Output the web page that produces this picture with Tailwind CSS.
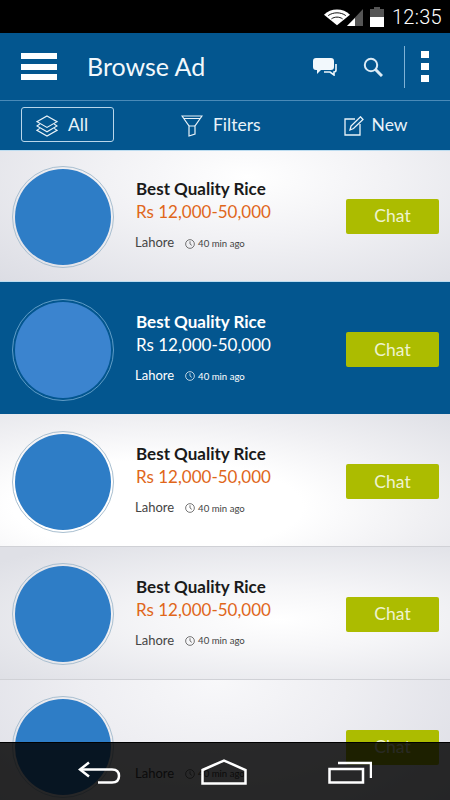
<!DOCTYPE html>
<html>
<head>
    <title>Browse Ad</title>
    <script src="https://cdn.jsdelivr.net/npm/@tailwindcss/browser@4"></script>
</head>
<body class="bg-white">
<div class="relative w-[450px] h-[800px] overflow-hidden font-[Lato,sans-serif]">

    <!-- status bar -->
    <div class="h-[33px] bg-black flex items-center justify-end pr-[8px] text-white">
        <svg width="26" height="18" viewBox="0 0 28 18" class="mr-[-1px]"><path d="M0 6.5C7 -1 21 -1 28 6.5L14 18Z" fill="#fff"/><path d="M4.5 7.5C10 3.5 18 3.5 23.5 7.5M8 11C11.5 8.5 16.5 8.5 20 11" stroke="#000" stroke-width="1" fill="none"/></svg>
        <svg width="18" height="18" viewBox="0 0 18 18" class="ml-[-3px]"><path d="M1 18L17 1V18Z" fill="#555"/><path d="M1 18L9 10V18Z" fill="#fff"/></svg>
        <svg width="14" height="20" viewBox="0 0 14 20" class="ml-[6px]"><path d="M4 0H10V2H14V20H0V2H4Z" fill="#555"/><path d="M0 10H14V20H0Z" fill="#fff"/></svg>
        <span class="ml-[8px] text-[20px] leading-none font-[Roboto,sans-serif] font-light tracking-[0.3px]">12:35</span>
    </div>

    <!-- header -->
    <div class="h-[67px] bg-[#03568f] flex items-center text-white">
        <div class="ml-[21px] w-[36px] flex flex-col gap-[4.5px]">
            <div class="h-[6px] bg-white"></div>
            <div class="h-[6px] bg-white"></div>
            <div class="h-[6px] bg-white"></div>
        </div>
        <div class="ml-[30px] text-[25px] leading-none text-[#f2f8fc]">Browse Ad</div>
        <svg width="24" height="18" viewBox="0 0 24 18" class="ml-[108px]"><path d="M3 0H18Q21 0 21 3V9Q21 12 18 12H8L4 16V12H3Q0 12 0 9V3Q0 0 3 0Z" fill="#f2f8fc"/><path d="M23 6V12Q23 14 21 14V17L17 14H11" stroke="#f2f8fc" stroke-width="1.6" fill="none"/></svg>
        <svg width="20" height="20" viewBox="0 0 20 20" class="ml-[26px]" fill="none" stroke="#dcebf5"><circle cx="8" cy="8" r="6.2" stroke-width="2"/><path d="M12.5 12.5L19 19" stroke-width="3"/></svg>
        <div class="ml-[21px] w-px h-[42px] bg-[#7fb2d6]"></div>
        <div class="ml-[16px] w-[8px] flex flex-col gap-[4.5px]">
            <div class="h-[7.5px] bg-white"></div>
            <div class="h-[7.5px] bg-white"></div>
            <div class="h-[7.5px] bg-white"></div>
        </div>
    </div>

    <!-- tabs -->
    <div class="h-[50px] bg-[#03568f] border-t border-[#4a8ab8] flex items-center text-[#eaf3f9] text-[17.5px]">
        <div class="ml-[21px] mb-[2px] w-[93px] h-[35px] border border-[#b9d6ea] rounded-[3px] flex items-center pl-[14px] gap-[10px]">
            <svg width="22" height="22" viewBox="0 0 23 23" class="mt-[3px]" fill="none" stroke="#eaf3f9" stroke-width="1.2"><path d="M11.5 1L22 7L11.5 13L1 7Z"/><path d="M4 9.5L1 11.5L11.5 17.5L22 11.5L19 9.5"/><path d="M4 14L1 16L11.5 22L22 16L19 14"/></svg>
            <span class="pt-[2px]">All</span>
        </div>
        <svg width="22" height="22" viewBox="0 0 22 22" class="ml-[67px]" fill="none" stroke="#eaf3f9" stroke-width="1.2"><path d="M1 1H21L14 11V19L8 21V11Z"/><path d="M8 11H14M3 3.5H19"/></svg>
        <span class="ml-[10px]">Filters</span>
        <svg width="20" height="20" viewBox="0 0 20 20" class="ml-[83px]" fill="none" stroke="#eaf3f9" stroke-width="1.3"><path d="M11 3H1V19H16V8"/><path d="M6 14L7 10L16.5 0.8L19 3.5L9.5 12.5Z"/></svg>
        <span class="ml-[8px]">New</span>
    </div>

    <!-- list -->
    <div>
        <div class="h-[132px] flex items-center pt-[2px] border-y border-[#bcdcf0] bg-[radial-gradient(ellipse_at_55%_20%,#ffffff_0%,#f2f2f5_40%,#dcdde4_100%)]">
            <div class="ml-[12px] w-[102px] h-[102px] rounded-full border border-[#a9bfd0] p-[2px] shrink-0"><div class="w-full h-full rounded-full bg-[#2e7dc6]"></div></div>
            <div class="ml-[21px] w-[211px] pb-[2px]">
                <div class="ml-[1px] text-[17px] leading-[22px] font-bold text-[#1a1a1a]">Best Quality Rice</div>
                <div class="ml-[1px] text-[17px] leading-[24px] text-[#e0661a]">Rs 12,000-50,000</div>
                <div class="mt-[9px] flex items-center text-[13px] text-[#444]">
                    <span class="mb-[1px]">Lahore</span>
                    <svg width="10" height="10" viewBox="0 0 11 11" class="ml-[11px]" fill="none" stroke="#444" stroke-width="0.8"><circle cx="5.5" cy="5.5" r="4.8"/><path d="M5.5 2.5V5.5L7.5 7"/></svg>
                    <span class="ml-[3px] mt-[1px] text-[9.6px]">40 min ago</span>
                </div>
            </div>
            <div class="mb-[1px] w-[93px] h-[35px] rounded-[2px] bg-[#acbc00] flex items-center justify-center text-[17.5px] text-[#eef3cf]">Chat</div>
        </div>

        <div class="h-[131.5px] flex items-center pt-[4px] bg-[#03568f] text-white">
            <div class="ml-[12px] w-[102px] h-[102px] rounded-full border border-[#5f9cc6] p-[2px] shrink-0"><div class="w-full h-full rounded-full bg-[#3b84cf]"></div></div>
            <div class="ml-[21px] w-[211px] pb-[2px]">
                <div class="ml-[1px] text-[17px] leading-[22px] font-bold">Best Quality Rice</div>
                <div class="ml-[1px] text-[17px] leading-[24px]">Rs 12,000-50,000</div>
                <div class="mt-[9px] flex items-center text-[13px]">
                    <span class="mb-[1px]">Lahore</span>
                    <svg width="10" height="10" viewBox="0 0 11 11" class="ml-[11px]" fill="none" stroke="#fff" stroke-width="0.8"><circle cx="5.5" cy="5.5" r="4.8"/><path d="M5.5 2.5V5.5L7.5 7"/></svg>
                    <span class="ml-[3px] mt-[1px] text-[9.6px]">40 min ago</span>
                </div>
            </div>
            <div class="w-[93px] h-[35px] rounded-[2px] bg-[#acbc00] flex items-center justify-center text-[17.5px] text-[#eef3cf]">Chat</div>
        </div>

        <div class="h-[133.5px] flex items-center pt-[4px] border-b border-[#d0d1d6] bg-[radial-gradient(ellipse_at_35%_70%,#ffffff_0%,#ffffff_35%,#f0f0f3_65%,#dfe0e6_100%)]">
            <div class="ml-[12px] w-[102px] h-[102px] rounded-full border border-[#a9bfd0] p-[2px] shrink-0"><div class="w-full h-full rounded-full bg-[#2e7dc6]"></div></div>
            <div class="ml-[21px] w-[211px] pb-[2px]">
                <div class="ml-[1px] text-[17px] leading-[22px] font-bold text-[#1a1a1a]">Best Quality Rice</div>
                <div class="ml-[1px] text-[17px] leading-[24px] text-[#e0661a]">Rs 12,000-50,000</div>
                <div class="mt-[9px] flex items-center text-[13px] text-[#444]">
                    <span class="mb-[1px]">Lahore</span>
                    <svg width="10" height="10" viewBox="0 0 11 11" class="ml-[11px]" fill="none" stroke="#444" stroke-width="0.8"><circle cx="5.5" cy="5.5" r="4.8"/><path d="M5.5 2.5V5.5L7.5 7"/></svg>
                    <span class="ml-[3px] mt-[1px] text-[9.6px]">40 min ago</span>
                </div>
            </div>
            <div class="w-[93px] h-[35px] rounded-[2px] bg-[#acbc00] flex items-center justify-center text-[17.5px] text-[#eef3cf]">Chat</div>
        </div>

        <div class="h-[132.5px] flex items-center pt-[3px] border-b border-[#d0d1d6] bg-[radial-gradient(ellipse_at_62%_55%,#ffffff_0%,#f6f6f8_30%,#dfe0e6_90%)]">
            <div class="ml-[12px] w-[102px] h-[102px] rounded-full border border-[#a9bfd0] p-[2px] shrink-0"><div class="w-full h-full rounded-full bg-[#2e7dc6]"></div></div>
            <div class="ml-[21px] w-[211px] pb-[2px]">
                <div class="ml-[1px] text-[17px] leading-[22px] font-bold text-[#1a1a1a]">Best Quality Rice</div>
                <div class="ml-[1px] text-[17px] leading-[24px] text-[#e0661a]">Rs 12,000-50,000</div>
                <div class="mt-[9px] flex items-center text-[13px] text-[#444]">
                    <span class="mb-[1px]">Lahore</span>
                    <svg width="10" height="10" viewBox="0 0 11 11" class="ml-[11px]" fill="none" stroke="#444" stroke-width="0.8"><circle cx="5.5" cy="5.5" r="4.8"/><path d="M5.5 2.5V5.5L7.5 7"/></svg>
                    <span class="ml-[3px] mt-[1px] text-[9.6px]">40 min ago</span>
                </div>
            </div>
            <div class="w-[93px] h-[35px] rounded-[2px] bg-[#acbc00] flex items-center justify-center text-[17.5px] text-[#eef3cf]">Chat</div>
        </div>

        <div class="h-[132.5px] flex items-center pt-[3px] bg-[radial-gradient(ellipse_at_48%_0%,#f8f8fa_0%,#eeeef2_40%,#dadbe3_100%)]">
            <div class="ml-[12px] w-[102px] h-[102px] rounded-full border border-[#a9bfd0] p-[2px] shrink-0"><div class="w-full h-full rounded-full bg-[#2e7dc6]"></div></div>
            <div class="ml-[21px] w-[211px] pb-[2px]">
                <div class="invisible ml-[1px] text-[17px] leading-[22px] font-bold">Best Quality Rice</div>
                <div class="invisible ml-[1px] text-[17px] leading-[24px]">Rs 12,000-50,000</div>
                <div class="mt-[9px] flex items-center text-[13px] text-[#444]">
                    <span class="mb-[1px]">Lahore</span>
                    <svg width="10" height="10" viewBox="0 0 11 11" class="ml-[11px]" fill="none" stroke="#444" stroke-width="0.8"><circle cx="5.5" cy="5.5" r="4.8"/><path d="M5.5 2.5V5.5L7.5 7"/></svg>
                    <span class="ml-[3px] mt-[1px] text-[9.6px]">40 min ago</span>
                </div>
            </div>
            <div class="w-[93px] h-[35px] rounded-[2px] bg-[#acbc00] flex items-center justify-center text-[17.5px] text-[#eef3cf]">Chat</div>
        </div>
    </div>

    <!-- nav bar lies over the list -->
    <div class="absolute left-0 right-0 bottom-0 h-[58px] bg-black/[0.83] border-t border-black flex items-center">
        <svg width="44" height="24" viewBox="0 0 44 24" class="ml-[78px] mt-[2px]" fill="none" stroke="#fff" stroke-width="2.5"><path d="M11 1.5L2 8.5L11 15.5"/><path d="M2 8.5H34Q41 8.5 41 15Q41 21.5 34 21.5H20"/></svg>
        <svg width="46" height="26" viewBox="0 0 46 26" class="ml-[79px]" fill="none" stroke="#fff" stroke-width="2.5"><path d="M1.5 11L23 1.5L44.5 11V24.5H1.5Z"/></svg>
        <svg width="44" height="23" viewBox="0 0 44 23" class="ml-[81px] mt-[2px]" fill="none" stroke="#fff" stroke-width="2.5"><path d="M1.5 8H35V21.5H1.5Z"/><path d="M10 2H43V17"/></svg>
    </div>
</div>
</body>
</html>
